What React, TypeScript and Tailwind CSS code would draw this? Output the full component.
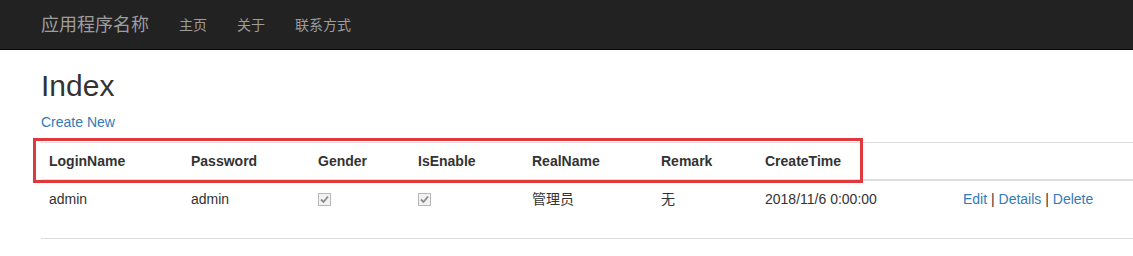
import React from 'react';

const font = { fontFamily: '"Liberation Sans", Arial, "Noto Sans CJK SC", sans-serif' };

function Check() {
  return (
    <span className="inline-flex h-[13px] w-[13px] items-center justify-center border border-[#b8b8b8] bg-[#f2f2f2] mt-[4px]">
      <svg width="9" height="9" viewBox="0 0 9 9">
        <path d="M1 4.5 L3.5 7 L8 1.5" fill="none" stroke="#8a8a8a" strokeWidth="1.8" />
      </svg>
    </span>
  );
}

const cols = ['LoginName', 'Password', 'Gender', 'IsEnable', 'RealName', 'Remark', 'CreateTime', ''];
const widths = ['w-[142px]', 'w-[127px]', 'w-[100px]', 'w-[114px]', 'w-[129px]', 'w-[104px]', 'w-[198px]', ''];

export default function App() {
  return (
    <div className="h-[256px] w-[1133px] overflow-hidden bg-white text-[14px] leading-[20px] text-[#333]" style={font}>
      {/* Navbar */}
      <nav className="flex h-[50px] items-center bg-[#222] border-b border-[#080808] pl-[26px]">
        <a className="px-[15px] text-[18px] leading-[20px] text-[#9d9d9d]">应用程序名称</a>
        <ul className="flex">
          <li><a className="block px-[15px] py-[15px] text-[#9d9d9d]">主页</a></li>
          <li><a className="block px-[15px] py-[15px] text-[#9d9d9d]">关于</a></li>
          <li><a className="block px-[15px] py-[15px] text-[#9d9d9d]">联系方式</a></li>
        </ul>
      </nav>

      <div className="pl-[41px]">
        <h2 className="mt-[19px] mb-[10px] text-[30px] leading-[33px] font-normal">Index</h2>
        <p className="mb-[10px]">
          <a className="text-[#337ab7]">Create New</a>
        </p>

        <div className="relative">
          <table className="w-full border-collapse">
            <thead>
              <tr>
                {cols.map((c, i) => (
                  <th
                    key={i}
                    className={`${widths[i]} border-t border-b-2 border-[#ddd] p-[8px] text-left font-bold`}
                  >
                    {c}
                  </th>
                ))}
              </tr>
            </thead>
            <tbody>
              <tr className="h-[58px] align-top">
                <td className="p-[8px]">admin</td>
                <td className="p-[8px]">admin</td>
                <td className="p-[8px]"><Check /></td>
                <td className="p-[8px]"><Check /></td>
                <td className="p-[8px]">管理员</td>
                <td className="p-[8px]">无</td>
                <td className="p-[8px]">2018/11/6 0:00:00</td>
                <td className="p-[8px]">
                  <a className="text-[#337ab7]">Edit</a> | <a className="text-[#337ab7]">Details</a> |{' '}
                  <a className="text-[#337ab7]">Delete</a>
                </td>
              </tr>
              <tr>
                <td colSpan={8} className="border-t border-[#ddd] h-[10px]"></td>
              </tr>
            </tbody>
          </table>

          {/* annotation box */}
          <div className="pointer-events-none absolute left-[-8px] top-[-4px] h-[45px] w-[830px] border-[3px] border-[#e0383d]" />
        </div>
      </div>
    </div>
  );
}
